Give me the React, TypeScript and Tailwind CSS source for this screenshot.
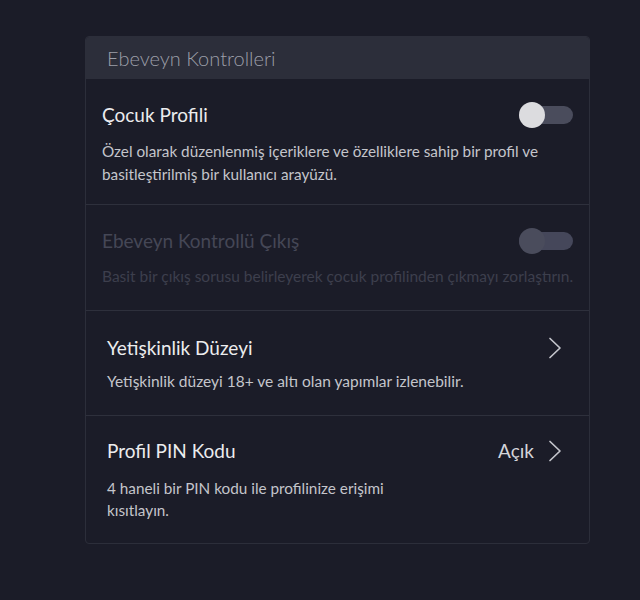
function Toggle({ disabled }: { disabled?: boolean }) {
  return (
    <div className="relative w-[54px] h-[24px]">
      <div
        className={
          disabled
            ? "absolute left-0 right-0 top-[3px] h-[18px] rounded-full bg-[#45475a]"
            : "absolute left-0 right-0 top-[3px] h-[18px] rounded-full bg-[#4a4c5c]"
        }
      />
      <div
        className={
          disabled
            ? "absolute left-0 top-0 w-[26px] h-[26px] -mt-[1px] rounded-full bg-[#4a4c5c]"
            : "absolute left-0 top-0 w-[26px] h-[26px] -mt-[1px] rounded-full bg-[#dcdcdf]"
        }
      />
    </div>
  );
}

function Chevron() {
  return (
    <svg width="14" height="22" viewBox="0 0 14 22" className="text-[#c4c5cc]">
      <polyline
        points="2,1.5 12,11 2,20.5"
        fill="none"
        stroke="currentColor"
        strokeWidth="1.7"
        strokeLinecap="round"
        strokeLinejoin="round"
      />
    </svg>
  );
}

export default function App() {
  return (
    <div className="min-h-[600px] w-[640px] bg-[#1b1c28] pt-[36px] font-['Lato',sans-serif]">
      <div className="ml-[85px] w-[505px] rounded-[4px] border border-[#2c2e3a] overflow-hidden">
        <div className="h-[42px] bg-[#2c2e3a] flex items-center pl-[21px] text-[20px] font-light text-[#9c9fa9]">
          Ebeveyn Kontrolleri
        </div>

        <div className="px-[16px] pt-[22px] pb-[18px] border-b border-[#2e303c]">
          <div className="flex items-center justify-between">
            <span className="text-[19px] text-[#ececee]">Çocuk Profili</span>
            <Toggle />
          </div>
          <p className="mt-[10px] text-[15.3px] leading-[23px] text-[#c4c5cb] pr-[30px]">
            Özel olarak düzenlenmiş içeriklere ve özelliklere sahip bir profil ve basitleştirilmiş bir kullanıcı arayüzü.
          </p>
        </div>

        <div className="px-[16px] pt-[22px] pb-[23px] border-b border-[#2e303c]">
          <div className="flex items-center justify-between">
            <span className="text-[19px] text-[#454756]">Ebeveyn Kontrollü Çıkış</span>
            <Toggle disabled />
          </div>
          <p className="mt-[10px] text-[15.5px] leading-[22px] text-[#3d3f4d] whitespace-nowrap">
            Basit bir çıkış sorusu belirleyerek çocuk profilinden çıkmayı zorlaştırın.
          </p>
        </div>

        <div className="pl-[21px] pr-[27px] pt-[23px] pb-[23px] border-b border-[#2e303c]">
          <div className="flex items-center justify-between h-[28px]">
            <span className="text-[19px] text-[#ececee]">Yetişkinlik Düzeyi</span>
            <Chevron />
          </div>
          <p className="mt-[8px] text-[15.5px] leading-[22px] text-[#c4c5cb]">
            Yetişkinlik düzeyi 18+ ve altı olan yapımlar izlenebilir.
          </p>
        </div>

        <div className="pl-[21px] pr-[27px] pt-[21px] pb-[22px]">
          <div className="flex items-center justify-between h-[28px]">
            <span className="text-[19px] text-[#ececee]">Profil PIN Kodu</span>
            <div className="flex items-center gap-[14px]">
              <span className="text-[19px] text-[#d4d5da]">Açık</span>
              <Chevron />
            </div>
          </div>
          <p className="mt-[12px] text-[15.3px] leading-[22px] text-[#c4c5cb] w-[300px]">
            4 haneli bir PIN kodu ile profilinize erişimi kısıtlayın.
          </p>
        </div>
      </div>
    </div>
  );
}
